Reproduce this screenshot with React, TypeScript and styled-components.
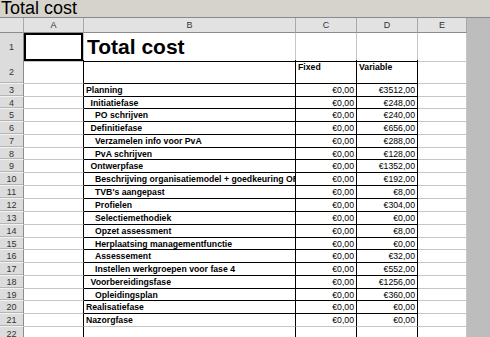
import React from 'react'
import styled, { createGlobalStyle } from 'styled-components'

const GlobalStyle = createGlobalStyle`
  html, body {
    margin: 0;
    padding: 0;
    background: #bdbdbd;
  }
  * {
    box-sizing: border-box;
  }
`

const COLS = '24px 60px 212px 61px 61px 49px'
const BLACK = '#000'
const GRID = '#c6c6c6'
const FONT = '"Liberation Sans", Arial, sans-serif'

const Window = styled.div`
  width: 490px;
  height: 337px;
  overflow: hidden;
  display: flex;
  flex-direction: column;
  font-family: ${FONT};
  background: #bdbdbd;
`

const TitleBar = styled.div`
  height: 18px;
  flex: none;
  background: #d6d3cc;
  border-bottom: 1px solid #8a8a8a;
  font-size: 18px;
  line-height: 17px;
  padding-left: 1px;
  color: #000;
  white-space: nowrap;
`

const Sheet = styled.div`
  display: flex;
  flex: 1;
`

const Grid = styled.div`
  width: 467px;
  flex: none;
  background: #fff;
  display: flex;
  flex-direction: column;
  border-right: 1px solid #9a9a9a;
`

const Row = styled.div<{ $h: number }>`
  display: grid;
  grid-template-columns: ${COLS};
  height: ${({ $h }) => $h}px;
  flex: none;
`

const HeadCell = styled.div`
  background: #e2e2e2;
  border-right: 1px solid #a8a8a8;
  border-bottom: 1px solid #8c8c8c;
  font-size: 9px;
  color: #333;
  display: flex;
  align-items: center;
  justify-content: center;
`

const RowNum = styled.div`
  background: #dcdcdc;
  border-right: 1px solid #8c8c8c;
  border-bottom: 1px solid #f2f2f2;
  box-shadow: inset 0 -1px 0 #b4b4b4;
  font-size: 9px;
  color: #333;
  display: flex;
  align-items: center;
  justify-content: center;
`

const Cell = styled.div<{
  $right?: string
  $bottom?: string
  $align?: 'left' | 'right'
  $bold?: boolean
  $indent?: number
  $top?: boolean
  $selected?: boolean
}>`
  border-right: 1px solid ${({ $right }) => $right || GRID};
  border-bottom: 1px solid ${({ $bottom }) => $bottom || GRID};
  font-size: 8.7px;
  font-weight: ${({ $bold }) => ($bold ? 700 : 400)};
  color: #000;
  text-align: ${({ $align }) => $align || 'left'};
  padding-left: ${({ $indent }) => 2 + ($indent || 0) * 4.5}px;
  padding-right: 2px;
  white-space: nowrap;
  overflow: hidden;
  line-height: ${({ $top }) => ($top ? '14px' : '12px')};
  ${({ $selected }) => ($selected ? 'box-shadow: inset 0 0 0 2px #000;' : '')}
`

const BigTitle = styled.div`
  border-right: 1px solid ${GRID};
  border-bottom: 1px solid ${BLACK};
  font-size: 21px;
  font-weight: 700;
  padding-left: 3px;
  line-height: 28px;
  white-space: nowrap;
`

const Filler = styled.div`
  flex: 1;
  background: #bdbdbd;
`

type Line = { label: string; level: number; variable: string; h: number }

const lines: Line[] = [
  { label: 'Planning', level: 0, variable: '€3512,00', h: 13 },
  { label: 'Initiatiefase', level: 1, variable: '€248,00', h: 12 },
  { label: 'PO schrijven', level: 2, variable: '€240,00', h: 13 },
  { label: 'Definitiefase', level: 1, variable: '€656,00', h: 13 },
  { label: 'Verzamelen info voor PvA', level: 2, variable: '€288,00', h: 13 },
  { label: 'PvA schrijven', level: 2, variable: '€128,00', h: 12 },
  { label: 'Ontwerpfase', level: 1, variable: '€1352,00', h: 13 },
  { label: 'Beschrijving organisatiemodel + goedkeuring OR', level: 2, variable: '€192,00', h: 13 },
  { label: "TVB's aangepast", level: 2, variable: '€8,00', h: 13 },
  { label: 'Profielen', level: 2, variable: '€304,00', h: 13 },
  { label: 'Selectiemethodiek', level: 2, variable: '€0,00', h: 13 },
  { label: 'Opzet assessment', level: 2, variable: '€8,00', h: 13 },
  { label: 'Herplaatsing managementfunctie', level: 2, variable: '€0,00', h: 12 },
  { label: 'Assessement', level: 2, variable: '€32,00', h: 13 },
  { label: 'Instellen werkgroepen voor fase 4', level: 2, variable: '€552,00', h: 13 },
  { label: 'Voorbereidingsfase', level: 1, variable: '€1256,00', h: 13 },
  { label: 'Opleidingsplan', level: 2, variable: '€360,00', h: 12 },
  { label: 'Realisatiefase', level: 0, variable: '€0,00', h: 13 },
  { label: 'Nazorgfase', level: 0, variable: '€0,00', h: 13 },
]

export default function App() {
  return (
    <>
      <GlobalStyle />
      <Window>
        <TitleBar>Total cost</TitleBar>
        <Sheet>
          <Grid>
            <Row $h={15}>
              <HeadCell />
              <HeadCell>A</HeadCell>
              <HeadCell>B</HeadCell>
              <HeadCell>C</HeadCell>
              <HeadCell>D</HeadCell>
              <HeadCell>E</HeadCell>
            </Row>
            <Row $h={27}>
              <RowNum>1</RowNum>
              <Cell $selected />
              <BigTitle>Total cost</BigTitle>
              <Cell $bottom={BLACK} />
              <Cell $bottom={BLACK} />
              <Cell />
            </Row>
            <Row $h={24}>
              <RowNum>2</RowNum>
              <Cell $right={BLACK} />
              <Cell $right={BLACK} $bottom={BLACK} />
              <Cell $right={BLACK} $bottom={BLACK} $bold $top>Fixed</Cell>
              <Cell $right={BLACK} $bottom={BLACK} $bold $top>Variable</Cell>
              <Cell />
            </Row>
            {lines.map((line, i) => {
              const last = i === lines.length - 1
              const edge = last ? GRID : BLACK
              return (
                <Row key={line.label} $h={line.h}>
                  <RowNum>{i + 3}</RowNum>
                  <Cell $right={BLACK} />
                  <Cell $right={BLACK} $bottom={edge} $bold $indent={line.level}>
                    {line.label}
                  </Cell>
                  <Cell $right={BLACK} $bottom={edge} $align="right">€0,00</Cell>
                  <Cell $right={BLACK} $bottom={edge} $align="right">{line.variable}</Cell>
                  <Cell />
                </Row>
              )
            })}
            <Row $h={14}>
              <RowNum>22</RowNum>
              <Cell $right={BLACK} />
              <Cell $right={BLACK} />
              <Cell $right={BLACK} />
              <Cell $right={BLACK} />
              <Cell />
            </Row>
          </Grid>
          <Filler />
        </Sheet>
      </Window>
    </>
  )
}
